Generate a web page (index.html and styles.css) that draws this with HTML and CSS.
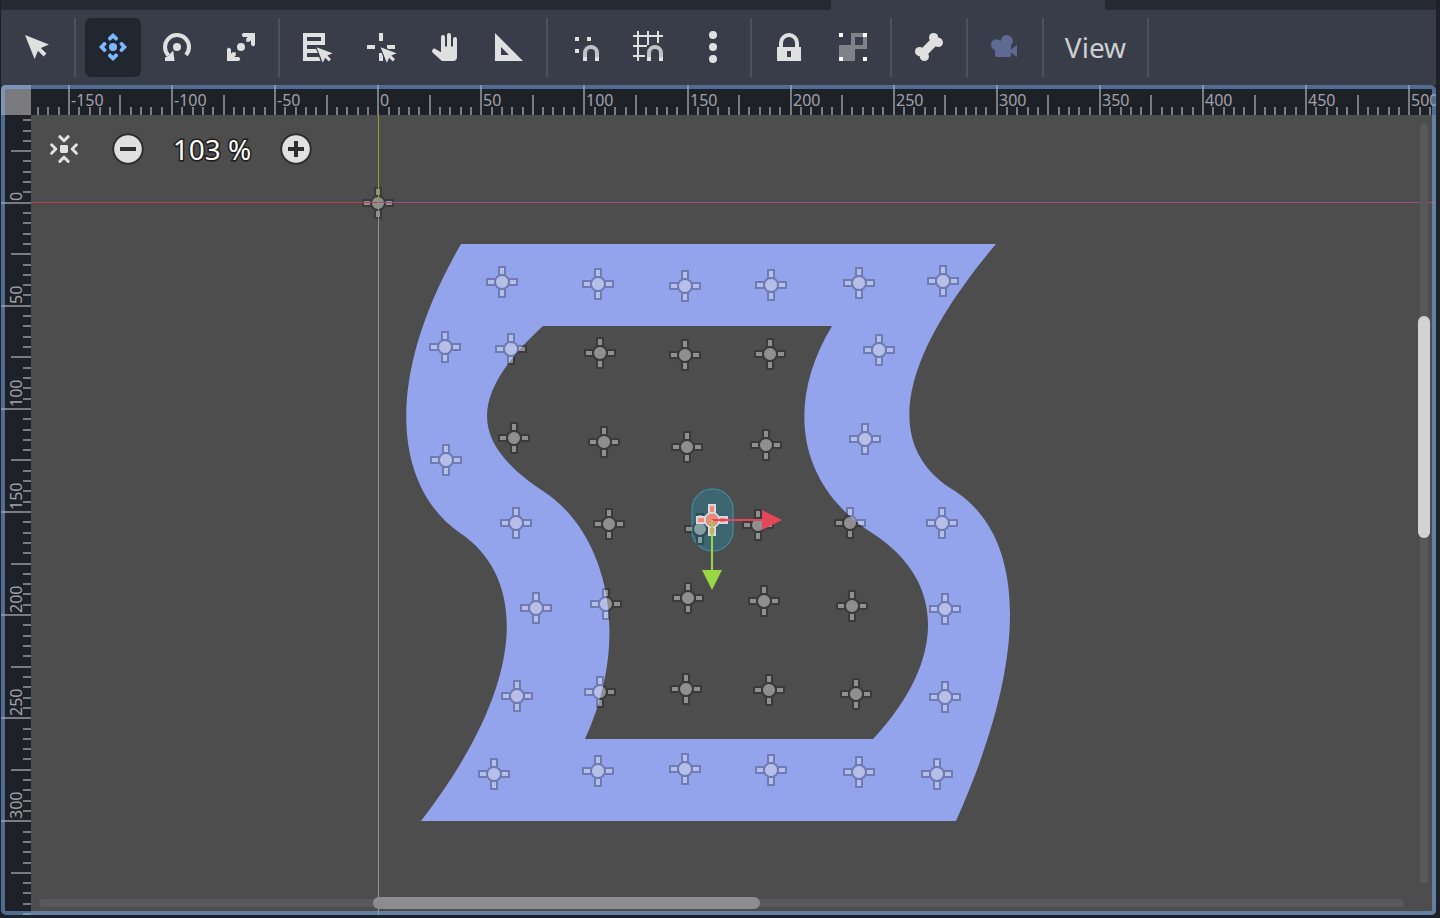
FILE: index.html
```html
<!DOCTYPE html>
<html lang="en">
<head>
<meta charset="utf-8">
<title>2D editor</title>
<link rel="stylesheet" href="styles.css">
</head>
<body>
<svg class="defs" aria-hidden="true">
  <defs>
    <path id="cursor" d="M7.8 8.1 15.8 11.1 13.2 12.3 15 14.1 13.9 15.2 12.1 13.4 10.9 15.9Z"/>
    <g id="marker">
      <path class="marker-edge" fill-rule="evenodd" d="M-4-16H4V-7A8 8 0 0 1 7-4H16V4H7A8 8 0 0 1 4 7V16H-4V7A8 8 0 0 1-7 4H-16V-4H-7A8 8 0 0 1-4-7ZM-2-14V-8H2V-14ZM-2 8V14H2V8ZM-14-2V2H-8V-2ZM8-2V2H14V-2ZM-6 0A6 6 0 0 0 6 0A6 6 0 0 0-6 0Z"/>
      <path class="marker-fill" d="M-2-14H2V-8H-2ZM-2 8H2V14H-2ZM-14-2H-8V2H-14ZM8-2H14V2H8ZM-6 0A6 6 0 0 0 6 0A6 6 0 0 0-6 0Z"/>
    </g>
    <g id="magnet">
      <path class="magnet-body" d="M8 13V11a3 3 0 0 1 6 0V13"/>
      <path d="M7 13h2v2H7zM13 13h2v2h-2z"/>
    </g>
  </defs>
</svg>
<div class="app">
  <div class="tab-strip"><div class="tab-current"></div></div>
  <header class="toolbar">
    <button class="tool" aria-label="Select"><svg viewBox="0 0 16 16"><path d="M2 2 14 6.8 9.9 8.5 12.7 11.3 11.3 12.7 8.5 9.9 6.8 14Z"/></svg></button>
    <span class="separator"></span>
    <button class="tool active" aria-label="Move" aria-pressed="true"><svg viewBox="0 0 16 16"><circle cx="8" cy="8" r="2"/><path id="chev" d="M8 1 10.5 3.4V4L9.9 4.7H9.2L8 3.6 6.8 4.7H6.1L5.5 4V3.4Z"/><use href="#chev" transform="rotate(90 8 8)"/><use href="#chev" transform="rotate(180 8 8)"/><use href="#chev" transform="rotate(270 8 8)"/></svg></button>
    <button class="tool" aria-label="Rotate"><svg viewBox="0 0 16 16"><circle cx="8" cy="8" r="2"/><path class="line" d="M12.5 12A6 6 0 1 0 3.7 12.2"/><path d="M6.1 9.8 6.8 15H2V13.3L3.4 12.6Z"/></svg></button>
    <button class="tool" aria-label="Scale"><svg viewBox="0 0 16 16"><circle cx="8" cy="8" r="2"/><path d="M9 1H15V7L14.2 7.7 13 7V4.6L12.2 5.4H10.6V3.8L11.4 3H9L8.3 2ZM7 15H1V9L1.8 8.3 3 9V11.4L3.8 10.6H5.4V12.2L4.6 13H7L7.7 14Z"/></svg></button>
    <span class="separator"></span>
    <button class="tool" aria-label="List select"><svg viewBox="0 0 16 16"><path d="M1 1H12V7H3V9H12V11H3V13H12V15H1ZM3 3V5H10V3Z"/><path class="cutout" d="M7.8 8 17 11 11 17Z"/><use href="#cursor"/></svg></button>
    <button class="tool" aria-label="Edit pivot"><svg viewBox="0 0 16 16"><path d="M7 1h2v4H7zM1 7h4v2H1zM11 7h4v2h-4zM7 11h2v4H7z"/><path class="cutout" d="M7.8 8 17 11.4 11 17Z"/><use href="#cursor"/></svg></button>
    <button class="tool" aria-label="Pan"><svg viewBox="0 0 16 16"><path d="M6 10.6V3a1 1 0 0 1 2 0V7.8H9V2a1 1 0 0 1 2 0V7.8H12V4a1 1 0 0 1 2 0V13a2 2 0 0 1-2 2H6.5L2 11A1.1 1.1 0 0 1 3.4 9.1Z"/></svg></button>
    <button class="tool" aria-label="Ruler"><svg viewBox="0 0 16 16"><path fill-rule="evenodd" d="M1 1 15 15H1ZM4 8V12H8Z"/></svg></button>
    <span class="separator"></span>
    <button class="tool" aria-label="Smart snap"><svg viewBox="0 0 16 16"><path d="M3 3h2v2H3zM9 3h2v2H9zM3 9h2v2H3z"/><use href="#magnet"/></svg></button>
    <button class="tool" aria-label="Grid snap"><svg viewBox="0 0 16 16"><path d="M2 0h1v15H2zM7 0h1v7H7zM12 0h1v6h-1zM0 2h15v1H0zM0 7h7v1H0zM0 12h6v1H0z"/><use href="#magnet"/></svg></button>
    <button class="tool" aria-label="Snapping options"><svg viewBox="0 0 16 16"><circle cx="8" cy="2" r="2"/><circle cx="8" cy="8" r="2"/><circle cx="8" cy="14" r="2"/></svg></button>
    <span class="separator"></span>
    <button class="tool" aria-label="Lock"><svg viewBox="0 0 16 16"><path fill-rule="evenodd" d="M3 8V6a5 5 0 0 1 10 0V8H14V15H2V8ZM5 8H11V6A3 3 0 0 0 5 6ZM7 10V13H9V10Z"/></svg></button>
    <button class="tool" aria-label="Group"><svg viewBox="0 0 16 16"><path class="dim" fill-rule="evenodd" d="M7 1H15V9H9V15H1V7H7ZM9 3V7H13V3Z"/><path class="bright" d="M1 1h2v2H1zM13 1h2v2h-2zM1 13h2v2H1zM13 13h2v2h-2z"/></svg></button>
    <span class="separator"></span>
    <button class="tool" aria-label="Skeleton"><svg viewBox="0 0 16 16"><path d="M9.2 3.8 12.2 6.8 6.8 12.2 3.8 9.2Z"/><circle cx="10.3" cy="3.3" r="2.3"/><circle cx="12.7" cy="5.7" r="2.3"/><circle cx="3.3" cy="10.3" r="2.3"/><circle cx="5.7" cy="12.7" r="2.3"/></svg></button>
    <span class="separator"></span>
    <button class="tool camera" aria-label="Override camera" disabled><svg viewBox="0 0 16 16"><circle cx="8.9" cy="5" r="3"/><circle cx="3.8" cy="6.9" r="2.8"/><path d="M3 7H11V9.2L14 7V13L11 10.8V12.4L10.4 13H3.6L3 12.4Z"/></svg></button>
    <span class="separator"></span>
    <button class="view-menu">View</button>
    <span class="separator"></span>
  </header>
  <main class="editor">
    <div class="ruler-corner"></div>
    <svg class="ruler" id="ruler-x" role="img" aria-label="Horizontal ruler"></svg>
    <svg class="ruler" id="ruler-y" role="img" aria-label="Vertical ruler"></svg>
    <section class="viewport">
      <svg class="canvas" role="img" aria-label="Scene">
        <g transform="translate(-31 -115)">
          <path class="shape" fill-rule="evenodd" d="M461 244H996C888 372 889 452 955 491C1021 534 1035 644 956 821H421C530 680 526 577 460 533C399 491 378 388 461 244Z
            M543 326H832C786 402 796 484 872 533C946 580 947 660 873 739H585C634 632 604 530 543 491C474 445 463 400 543 326Z"/>
          <rect class="capsule" x="692" y="489" width="41" height="62" rx="20"/>
          <g id="markers"></g>
          <path class="axis-x" d="M0 202h378v1H0z"/>
          <path class="axis-x-positive" d="M378 202h3000v1H378z"/>
          <path class="axis-y" d="M378 0h1v202h-1z"/>
          <path class="axis-y-positive" d="M378 202h1v3000h-1z"/>
          <use class="selected" href="#marker" x="712" y="520"/>
          <path class="arrow-x" d="M712 519H762V510L782 520 762 530V521H712Z"/>
          <path class="arrow-y" d="M711 520H713V570H722L712 590 702 570H711Z"/>
        </g>
      </svg>
      <div class="zoom-bar">
        <button class="tool" aria-label="Center view"><svg viewBox="0 0 16 16"><rect x="6" y="6" width="4" height="4" rx=".7"/><path id="fold" class="fold" d="M5.9 1.8 8 3.9 10.1 1.8"/><use href="#fold" transform="rotate(90 8 8)"/><use href="#fold" transform="rotate(180 8 8)"/><use href="#fold" transform="rotate(270 8 8)"/></svg></button>
        <button class="tool" aria-label="Zoom out"><svg viewBox="0 0 16 16"><circle class="disc" cx="8" cy="8" r="7.4"/><path class="sign" d="M4 7h8v2H4z"/></svg></button>
        <button class="zoom-value">103 %</button>
        <button class="tool" aria-label="Zoom in"><svg viewBox="0 0 16 16"><circle class="disc" cx="8" cy="8" r="7.4"/><path class="sign" d="M4 7h3V4h2v3h3v2H9v3H7V9H4z"/></svg></button>
      </div>
      <div class="scroll vertical"><div class="thumb"></div></div>
      <div class="scroll horizontal"><div class="thumb"></div></div>
    </section>
  </main>
</div>
<script src="main.js"></script>
</body>
</html>
```
FILE: styles.css
```css
* { box-sizing: border-box; }
body {
  margin: 0;
  background: #1e2128;
  color: #cdcfd2;
  font-family: "Noto Sans", "Open Sans", sans-serif;
}
button {
  border: 0;
  padding: 0;
  background: none;
  color: inherit;
  font: inherit;
}
.defs { position: absolute; width: 0; height: 0; }
.app {
  display: flex;
  flex-direction: column;
  height: 100vh;
  padding: 0 4px 3px 1px;
}
.tab-strip {
  display: flex;
  height: 10px;
  padding-left: 830px;
  background: #262a33;
}
.tab-current { width: 274px; background: #383d49; }
.toolbar {
  display: flex;
  gap: 8px;
  padding: 8px;
  background: #383d49;
}
.tool {
  display: flex;
  align-items: center;
  justify-content: center;
  width: 56px;
  height: 59px;
  padding-bottom: 1px;
  border-radius: 6px;
  fill: #e0e0e0;
}
.tool svg { width: 32px; height: 32px; overflow: visible; }
.tool.active { background: #212731; fill: #7cb8ff; }
.tool.camera { fill: #5f6a92; }
.line { fill: none; stroke: #e0e0e0; stroke-width: 2; }
.magnet-body { fill: none; stroke: #bfc1c5; stroke-width: 2; }
.cutout { fill: #383d49; stroke: #383d49; stroke-width: 1; }
.dim { fill: #808289; }
.bright { fill: #fff; }
.separator {
  width: 4px;
  border: solid transparent;
  border-width: 0 1px;
  background: #4d515c;
  background-clip: padding-box;
}
.view-menu { width: 85px; font-size: 28px; line-height: 59px; }

.editor {
  position: relative;
  flex: 1;
  display: grid;
  grid-template: 30px minmax(0, 1fr) / 30px minmax(0, 1fr);
  overflow: hidden;
  border-radius: 4px;
}
.editor::after {
  content: "";
  position: absolute;
  inset: 0;
  border: 4px solid rgba(124, 171, 234, 0.55);
  border-radius: 5px;
  pointer-events: none;
}
.ruler-corner { background: #7a7a7f; }
.ruler { width: 100%; height: 100%; background: #1e2128; }
.ruler rect { fill: #7b7c81; }
.ruler text { fill: #a0a2a7; font-size: 16px; }
.viewport { position: relative; background: #4d4d4d; }
.canvas { display: block; position: absolute; width: 100%; height: 100%; }
.shape { fill: #93a4ed; }
.marker-edge { fill: var(--edge, rgba(0, 0, 0, 0.24)); }
.marker-fill { fill: var(--core, rgba(224, 224, 224, 0.45)); }
.selected { --edge: #d8d8d8; --core: #f5867a; }
.capsule { fill: rgba(45, 128, 148, 0.5); stroke: #3f97b4; }
.axis-x { fill: #b34250; }
.axis-x-positive { fill: #9b4e90; }
.axis-y { fill: #82aa2c; }
.axis-y-positive { fill: #7ba07a; }
.arrow-x { fill: #e5475a; }
.arrow-y { fill: #98d743; }

.zoom-bar {
  position: absolute;
  top: 5px;
  left: 5px;
  display: flex;
  gap: 8px;
}
.fold {
  fill: none;
  stroke: #e0e0e0;
  stroke-width: 1.5;
  stroke-linecap: round;
  stroke-linejoin: round;
}
.disc { stroke: #2f2f2f; stroke-width: 1; }
.sign { fill: #2f2f2f; }
.zoom-value {
  width: 96px;
  color: #fff;
  font-size: 28px;
  line-height: 59px;
  -webkit-text-stroke: 3px #1c1c1c;
  paint-order: stroke fill;
}
.scroll { position: absolute; border-radius: 4px; background: #595959; }
.thumb { position: absolute; border-radius: 6px; }
.scroll.vertical { top: 8px; right: 8px; bottom: 32px; width: 8px; }
.vertical .thumb { top: 25.4%; left: -2px; width: 12px; height: 29.2%; background: #d2d2d2; }
.scroll.horizontal { left: 8px; right: 32px; bottom: 8px; height: 8px; }
.horizontal .thumb { left: 24.5%; top: -2px; width: 28.3%; height: 12px; background: #8c8c8c; }
```
FILE: main.js
```js
const SVG = "http://www.w3.org/2000/svg";
const STEP = 10.31;

function add(parent, name, attrs, text) {
  const node = document.createElementNS(SVG, name);
  for (const key in attrs) node.setAttribute(key, attrs[key]);
  if (text !== undefined) node.textContent = text;
  parent.appendChild(node);
}

// Every tenth tick carries a label, every fifth is of medium length.
function drawRuler(id, origin, vertical) {
  const ruler = document.getElementById(id);
  const length = vertical ? ruler.clientHeight : ruler.clientWidth;
  const first = Math.ceil(-origin / STEP);
  for (let i = first; origin + i * STEP < length; i++) {
    const at = Math.round(origin + i * STEP);
    const size = i % 10 === 0 ? 30 : i % 5 === 0 ? 20 : 8;
    if (vertical) add(ruler, "rect", { x: 30 - size, y: at - 1, width: size, height: 2 });
    else add(ruler, "rect", { x: at - 1, y: 30 - size, width: 2, height: size });
    if (i % 10 === 0) {
      const place = vertical ? `translate(21 ${at - 2}) rotate(-90)` : `translate(${at + 2} 21)`;
      add(ruler, "text", { transform: place }, String(i * 5));
    }
  }
}

const markers = [
  [378, 203], [502, 282], [598, 284], [685, 286], [771, 285], [859, 283], [943, 281],
  [445, 347], [511, 349], [600, 353], [685, 355], [770, 354], [879, 350],
  [514, 438], [604, 442], [687, 447], [766, 445], [865, 439],
  [446, 460], [516, 523], [609, 524], [700, 529], [758, 525], [850, 523], [942, 523],
  [536, 608], [606, 604], [688, 598], [764, 601], [852, 606], [945, 609],
  [517, 696], [600, 692], [686, 689], [769, 690], [856, 694], [945, 697],
  [494, 774], [598, 771], [685, 769], [771, 770], [859, 772], [937, 774]
];

drawRuler("ruler-x", 347.2, false);
drawRuler("ruler-y", 87.7, true);
const layer = document.getElementById("markers");
for (const [x, y] of markers) add(layer, "use", { href: "#marker", x, y });
```
